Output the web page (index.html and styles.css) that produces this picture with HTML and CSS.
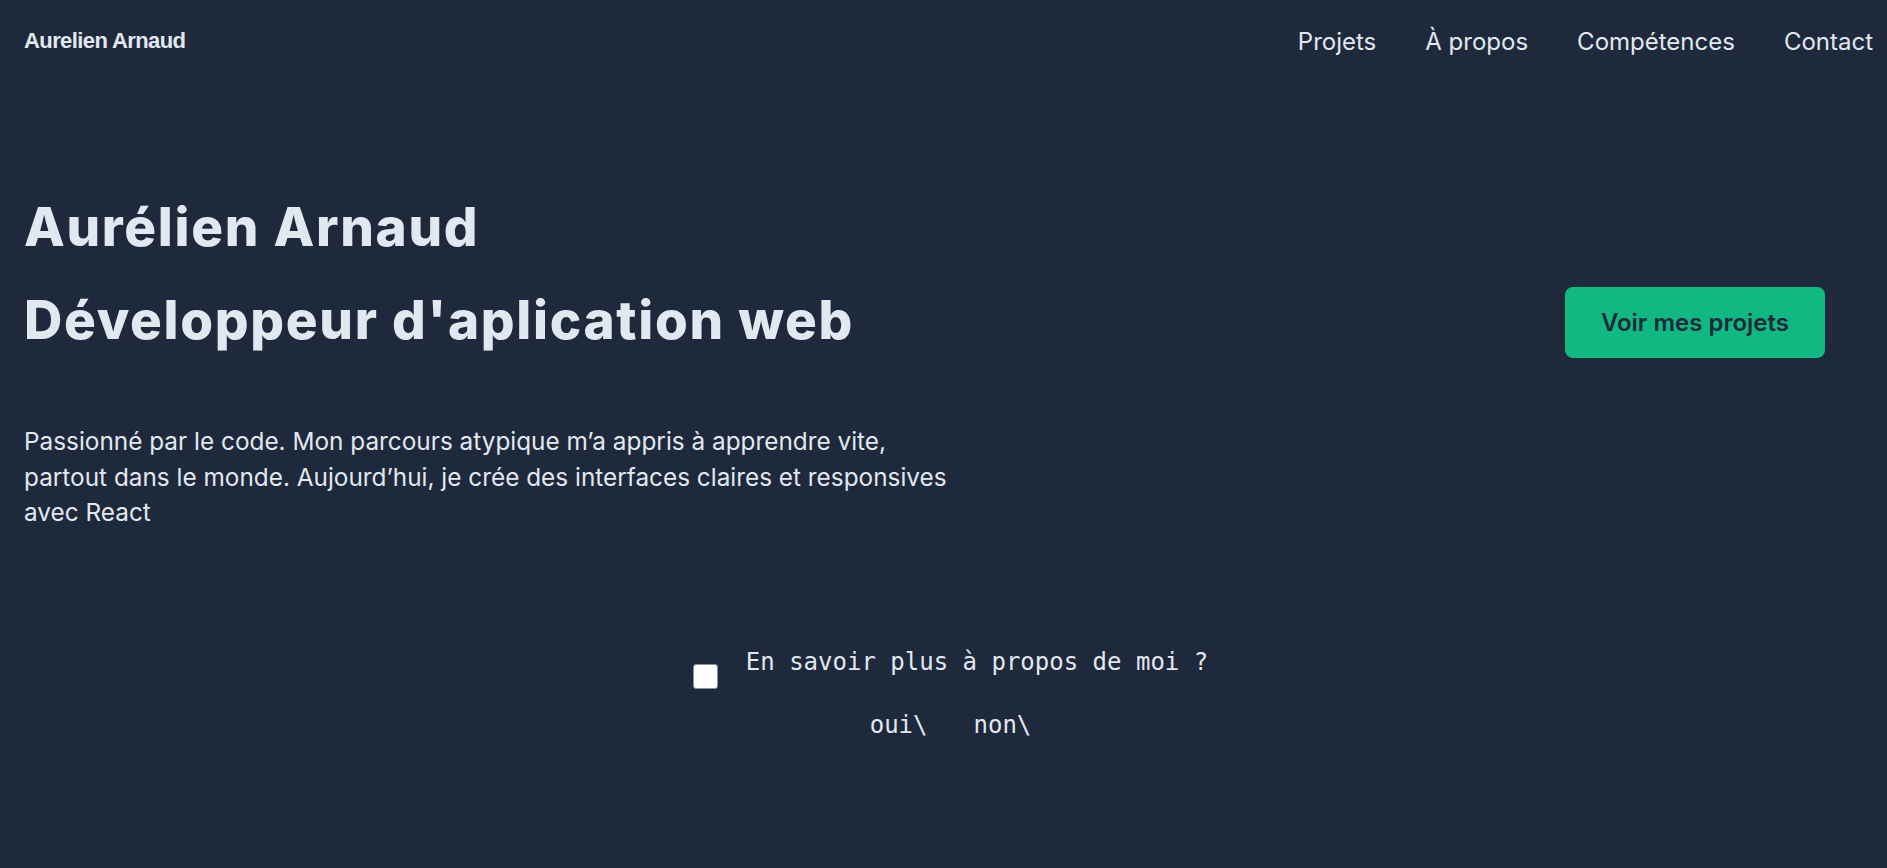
FILE: index.html
```html
<!DOCTYPE html>
<html lang="fr">
<head>
<meta charset="utf-8">
<title>Aurelien Arnaud</title>
<link rel="stylesheet" href="styles.css">
</head>
<body>
<header class="site-header">
  <a class="logo" href="#">Aurelien Arnaud</a>
  <nav class="main-nav">
    <a href="#projets">Projets</a>
    <a href="#apropos">À propos</a>
    <a href="#competences">Compétences</a>
    <a href="#contact">Contact</a>
  </nav>
</header>
<main class="hero">
  <h1 class="hero-title">Aurélien Arnaud</h1>
  <div class="hero-row">
    <h2 class="hero-subtitle">Développeur d'aplication web</h2>
    <a class="btn-primary" href="#projets">Voir mes projets</a>
  </div>
  <p class="intro">Passionné par le code. Mon parcours atypique m’a appris à apprendre vite, partout dans le monde. Aujourd’hui, je crée des interfaces claires et responsives avec React</p>
  <form class="about-toggle">
    <div class="toggle-row">
      <input class="toggle-box" type="checkbox" id="more">
      <label class="toggle-label" for="more">En savoir plus à propos de moi ?</label>
    </div>
    <div class="toggle-options">
      <span>oui\</span>
      <span>non\</span>
    </div>
  </form>
</main>
</body>
</html>
```

FILE: styles.css
```css
* { box-sizing: border-box; }

html, body {
  margin: 0;
  padding: 0;
  background: #1e293b;
  color: #e2e8f0;
  font-family: "Inter", "Liberation Sans", sans-serif;
}

body {
  min-height: 868px;
}

.site-header {
  height: 82px;
  display: flex;
  align-items: center;
  justify-content: space-between;
  padding: 0 14px 0 24px;
}

.logo {
  font-family: "Liberation Sans", Arial, sans-serif;
  font-weight: 700;
  font-size: 22px;
  letter-spacing: -0.6px;
  color: #e2e8f0;
  text-decoration: none;
}

.main-nav {
  display: flex;
  gap: 49px;
}

.main-nav a {
  color: #e2e8f0;
  text-decoration: none;
  font-size: 24px;
  font-weight: 400;
}

.hero {
  padding: 0 62px 0 24px;
}

.hero-title,
.hero-subtitle {
  margin: 0;
  font-family: "Inter", sans-serif;
  font-weight: 800;
  font-size: 53px;
  line-height: 93px;
  letter-spacing: 1.7px;
  color: #e2e8f0;
}

.hero-title {
  margin-top: 99px;
}

.hero-row {
  display: flex;
  align-items: center;
  justify-content: space-between;
}

.btn-primary {
  display: inline-block;
  background: #10b981;
  color: #1e293b;
  font-weight: 600;
  font-size: 24px;
  padding: 22px 36px;
  border-radius: 8px;
  text-decoration: none;
  line-height: 27px;
  margin-top: 3px;
}

.intro {
  margin: 57px 0 0;
  max-width: 925px;
  font-size: 24.35px;
  line-height: 35.5px;
}

.about-toggle {
  margin-top: 117px;
  display: flex;
  flex-direction: column;
  align-items: center;
  gap: 22px;
  padding-left: 52px;
  font-family: "DejaVu Sans Mono", monospace;
  font-size: 24px;
}

.toggle-row {
  display: flex;
  align-items: flex-start;
  gap: 28px;
}

.toggle-box {
  appearance: none;
  -webkit-appearance: none;
  margin: 16px 0 0;
  width: 25px;
  height: 25px;
  background: #ffffff;
  border: 1px solid #8a8f98;
  border-radius: 3px;
}

.toggle-label {
  line-height: 28px;
}

.toggle-options {
  display: flex;
  gap: 46px;
  line-height: 28px;
}
```
